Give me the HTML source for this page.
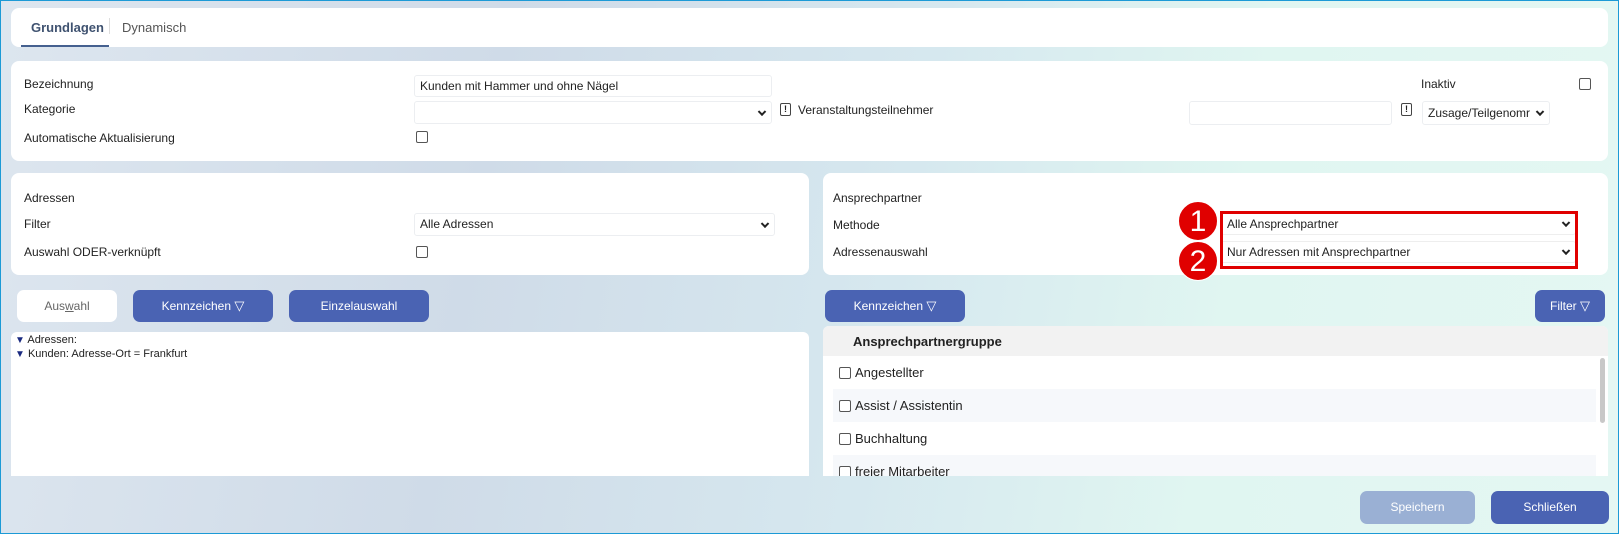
<!DOCTYPE html>
<html><head><meta charset="utf-8"><style>
*{box-sizing:border-box;margin:0;padding:0}
body{width:1619px;height:534px;overflow:hidden;font-family:"Liberation Sans",Arial,sans-serif;font-size:12px;color:#222;position:relative;
background:linear-gradient(100deg,#dde6ef 0%,#cfdbe8 30%,#d6e8ef 55%,#e0f6f1 75%,#e4f7f3 100%);border:1px solid #1c9ad6}
.p{position:absolute;background:#fff;border-radius:8px}
.a{position:absolute;white-space:nowrap}
.in{position:absolute;background:#fff;border:1px solid #eceef1;border-radius:3px;padding-left:5px;line-height:20px}
.chev{position:absolute;right:6px;top:50%;width:6px;height:6px;border-right:2px solid #222;border-bottom:2px solid #222;transform:translateY(-70%) rotate(45deg)}
.cb{position:absolute;width:12px;height:12px;border:1px solid #555;border-radius:2px;background:#fff}
.ex{position:absolute;width:11px;height:13px;border:1px solid #444;border-radius:2px;font-size:9px;font-weight:bold;text-align:center;line-height:11px}
.btn{position:absolute;background:#4a63b3;color:#fff;border-radius:7px;text-align:center;line-height:32px;height:32px}
.circ{position:absolute;width:40px;height:40px;border-radius:50%;background:#e00000;color:#fff;font-size:30px;text-align:center;line-height:40px;border:1px solid #fff}
.row{position:absolute;left:832px;width:763px;height:33px;line-height:33px;font-size:13px}
.row .cb{left:6px;top:11px}
.row span{position:absolute;left:22px}
</style></head><body>
<div class="p" style="left:10px;top:7px;width:1597px;height:39px"></div>
<div class="a" style="left:30px;top:19px;font-weight:bold;color:#3f5270;font-size:13px">Grundlagen</div>
<div class="a" style="left:108px;top:17px;width:1px;height:16px;background:#ddd"></div>
<div class="a" style="left:121px;top:19px;color:#555;font-size:13px">Dynamisch</div>
<div class="a" style="left:20px;top:44px;width:88px;height:2px;background:#45608f"></div>

<div class="p" style="left:10px;top:60px;width:1597px;height:100px"></div>
<div class="a" style="left:23px;top:76px">Bezeichnung</div>
<div class="in" style="left:413px;top:74px;width:358px;height:22px">Kunden mit Hammer und ohne Nägel</div>
<div class="a" style="left:23px;top:101px">Kategorie</div>
<div class="in" style="left:413px;top:100px;width:358px;height:23px"><i class="chev"></i></div>
<div class="ex" style="left:779px;top:102px">!</div>
<div class="a" style="left:797px;top:102px">Veranstaltungsteilnehmer</div>
<div class="in" style="left:1188px;top:100px;width:203px;height:24px"></div>
<div class="ex" style="left:1400px;top:102px">!</div>
<div class="in" style="left:1421px;top:100px;width:128px;height:24px;line-height:22px;overflow:hidden">Zusage/Teilgenomr<i class="chev" style="background:#fff;box-shadow:0 0 0 3px #fff"></i></div>
<div class="a" style="left:1420px;top:76px">Inaktiv</div>
<div class="cb" style="left:1578px;top:77px"></div>
<div class="a" style="left:23px;top:130px">Automatische Aktualisierung</div>
<div class="cb" style="left:415px;top:130px"></div>

<div class="p" style="left:10px;top:172px;width:798px;height:102px"></div>
<div class="a" style="left:23px;top:190px">Adressen</div>
<div class="a" style="left:23px;top:216px">Filter</div>
<div class="in" style="left:413px;top:212px;width:361px;height:23px">Alle Adressen<i class="chev"></i></div>
<div class="a" style="left:23px;top:244px">Auswahl ODER-verknüpft</div>
<div class="cb" style="left:415px;top:245px"></div>

<div class="p" style="left:822px;top:172px;width:785px;height:102px"></div>
<div class="a" style="left:832px;top:190px">Ansprechpartner</div>
<div class="a" style="left:832px;top:217px">Methode</div>
<div class="a" style="left:832px;top:244px">Adressenauswahl</div>
<div class="in" style="left:1220px;top:212px;width:355px;height:22px;border-color:#eee">Alle Ansprechpartner<i class="chev"></i></div>
<div class="in" style="left:1220px;top:240px;width:355px;height:22px;border-color:#eee">Nur Adressen mit Ansprechpartner<i class="chev"></i></div>
<div class="a" style="left:1219px;top:210px;width:358px;height:58px;border:3px solid #e00000"></div>
<div class="circ" style="left:1177px;top:200px">1</div>
<div class="circ" style="left:1177px;top:240px">2</div>

<div class="p" style="left:16px;top:289px;width:100px;height:32px;border-radius:7px;text-align:center;line-height:32px;color:#666">Aus<u>w</u>ahl</div>
<div class="btn" style="left:132px;top:289px;width:140px">Kennzeichen <span style="font-size:13px">&#9661;</span></div>
<div class="btn" style="left:288px;top:289px;width:140px">Einzelauswahl</div>
<div class="btn" style="left:824px;top:289px;width:140px">Kennzeichen <span style="font-size:13px">&#9661;</span></div>
<div class="btn" style="left:1534px;top:289px;width:70px">Filter <span style="font-size:13px">&#9661;</span></div>

<div class="p" style="left:10px;top:331px;width:798px;height:144px;border-radius:6px 6px 0 0"></div>
<div class="a" style="left:14px;top:333px;font-size:11px"><span style="color:#1a2a80;font-size:10px">&#9660;</span> Adressen:</div>
<div class="a" style="left:14px;top:347px;font-size:11px"><span style="color:#1a2a80;font-size:10px">&#9660;</span> Kunden: Adresse-Ort = Frankfurt</div>

<div class="a" style="left:822px;top:325px;width:785px;height:150px;background:#fff;border-radius:6px 6px 0 0"></div>
<div class="a" style="left:822px;top:325px;width:785px;height:30px;background:#f2f2f2;border-radius:6px 6px 0 0"></div>
<div class="a" style="left:852px;top:333px;font-weight:bold;font-size:13px">Ansprechpartnergruppe</div>
<div class="row" style="top:355px"><i class="cb"></i><span>Angestellter</span></div>
<div class="row" style="top:388px;background:#f6f8fb"><i class="cb"></i><span>Assist / Assistentin</span></div>
<div class="row" style="top:421px"><i class="cb"></i><span>Buchhaltung</span></div>
<div class="row" style="top:454px;background:#f6f8fb;height:21px;overflow:hidden"><i class="cb"></i><span>freier Mitarbeiter</span></div>
<div class="a" style="left:1599px;top:357px;width:5px;height:65px;background:#c8c8c8;border-radius:3px"></div>

<div class="btn" style="left:1359px;top:490px;width:115px;height:33px;background:#9ab0d4">Speichern</div>
<div class="btn" style="left:1490px;top:490px;width:118px;height:33px">Schließen</div>
</body></html>
